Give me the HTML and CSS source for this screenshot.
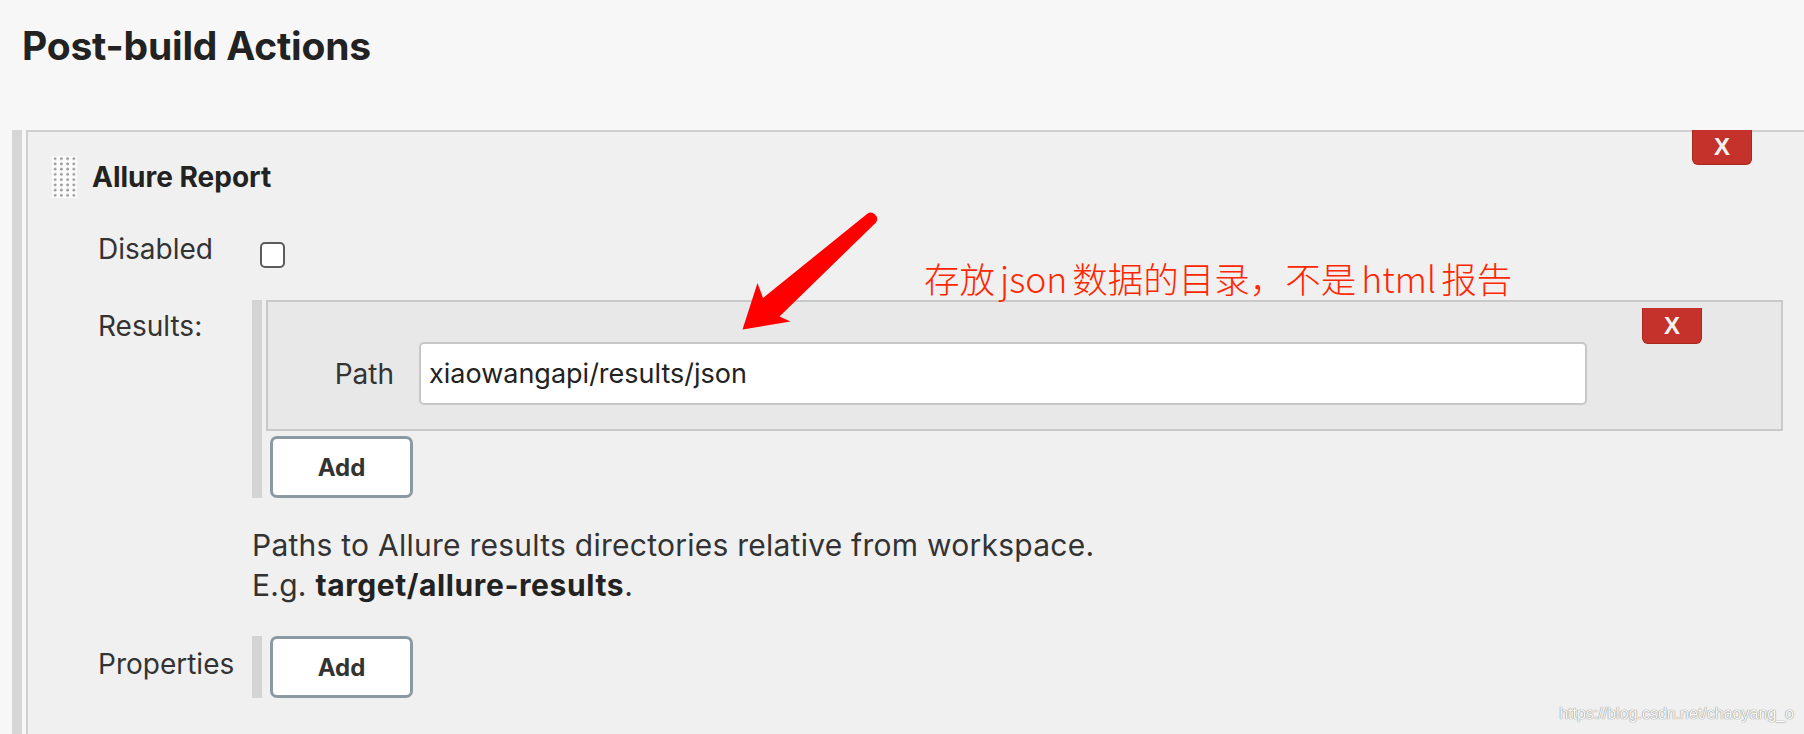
FILE: index.html
```html
<!DOCTYPE html>
<html lang="zh">
<head>
<meta charset="utf-8">
<title>Post-build Actions</title>
<link rel="stylesheet" href="styles.css">
</head>
<body>
<header class="page-head">
  <h1 class="page-title">Post-build Actions</h1>
</header>
<main class="main">
  <div class="side-bar"></div>
  <section class="panel">
    <div class="panel-head">
      <div class="panel-title-group">
        <span class="grip"></span>
        <h2 class="panel-title">Allure Report</h2>
      </div>
      <button class="del-btn del-top" type="button">X</button>
    </div>
    <div class="form">
      <div class="row row-disabled">
        <label class="lbl">Disabled</label>
        <div class="ctl"><input type="checkbox" class="chk"></div>
      </div>
      <div class="row row-results">
        <label class="lbl lbl-results">Results:</label>
        <div class="ctl">
          <div class="repeat">
            <div class="repeat-bar"></div>
            <div class="repeat-body">
              <div class="item">
                <div class="item-fields">
                  <label class="path-lbl">Path</label>
                  <input class="txt" type="text" value="xiaowangapi/results/json">
                </div>
                <button class="del-btn del-item" type="button">X</button>
              </div>
              <button class="add-btn add-first" type="button">Add</button>
            </div>
          </div>
        </div>
      </div>
      <div class="row row-help">
        <div></div>
        <div class="help">
          <div>Paths to Allure results directories relative from workspace.</div>
          <div>E.g. <b>target/allure-results</b>.</div>
        </div>
      </div>
      <div class="row row-props">
        <label class="lbl lbl-props">Properties</label>
        <div class="ctl">
          <div class="repeat">
            <div class="repeat-bar"></div>
            <div class="repeat-body">
              <button class="add-btn" type="button">Add</button>
            </div>
          </div>
        </div>
      </div>
    </div>
  </section>
</main>
<svg class="arrow" width="1804" height="734" viewBox="0 0 1804 734" aria-hidden="true">
  <path d="M867,214 L763,298 L757.5,283 L742.5,329.5 L790.5,321.5 L779.5,316.5 L876,222.5 A6.3,6.3 0 0 0 867,214 Z" fill="#ff0000"/>
</svg>
<div class="note">存放<span class="lat">json</span>数据的目录，不是<span class="lat">html</span>报告</div>
<div class="watermark">https://blog.csdn.net/chaoyang_o</div>
</body>
</html>
```
FILE: styles.css
```css
html, body {
  margin: 0;
  height: 100%;
  overflow: hidden;
}
body {
  position: relative;
  display: flex;
  flex-direction: column;
  background: #f7f7f7;
  font-family: Inter, "Noto Sans", sans-serif;
  color: #333;
}
.page-head {
  height: 130px;
  box-sizing: border-box;
  padding: 22px 0 0 22px;
  flex: none;
}
.page-title {
  margin: 0;
  font-size: 39px;
  font-weight: 700;
  line-height: 47px;
  color: #222;
  letter-spacing: -0.2px;
}
.main {
  flex: 1;
  display: flex;
  padding-left: 12px;
}
.side-bar {
  width: 10px;
  background: #d6d6d6;
  margin-right: 4px;
  flex: none;
}
.panel {
  flex: 1;
  background: #f0f0f0;
  border-top: 2px solid #cfcfcf;
  border-left: 2px solid #d0d0d0;
}
.panel-head {
  display: flex;
  justify-content: space-between;
  align-items: flex-start;
  padding: 0 52px 0 24px;
}
.panel-title-group {
  display: flex;
  align-items: center;
  margin-top: 24px;
  gap: 15px;
}
.grip {
  width: 25px;
  height: 42px;
  background-color: #fbfbfb;
  background-image: radial-gradient(circle, #9c9c9c 1px, transparent 1.7px);
  background-size: 6.25px 5.25px;
}
.panel-title {
  margin: 0;
  font-size: 28px;
  font-weight: 700;
  line-height: 34px;
  color: #222;
}
.del-btn {
  width: 60px;
  height: 36px;
  box-sizing: border-box;
  border: 1px solid #a8271f;
  border-top: none;
  background: #c4322b;
  color: #f2f2f2;
  font-family: "Liberation Sans", Arial, sans-serif;
  font-weight: 700;
  font-size: 24px;
  line-height: 34px;
  padding: 0;
  border-radius: 0 0 6px 6px;
}
.del-top {
  margin-top: -2px;
  height: 35px;
}
.del-item {
  flex: none;
  border-top: 1px solid #c4322b;
}
.form {
  padding: 0 21px 0 70px;
}
.row {
  display: grid;
  grid-template-columns: 154px 1fr;
  align-items: start;
}
.lbl {
  font-size: 28px;
  line-height: 34px;
  color: #333;
}
.row-disabled {
  margin-top: 34px;
}
.chk {
  appearance: none;
  -webkit-appearance: none;
  margin: 10px 0 0 8px;
  width: 25px;
  height: 26px;
  box-sizing: border-box;
  border: 2px solid #5b5b5b;
  border-radius: 5px;
  background: #fff;
  display: block;
}
.row-results {
  margin-top: 32px;
}
.lbl-results {
  padding-top: 9px;
}
.repeat {
  display: flex;
}
.repeat-bar {
  width: 10px;
  flex: none;
  background: #d4d4d4;
}
.repeat-body {
  flex: 1;
  margin-left: 4px;
  display: flex;
  flex-direction: column;
  align-items: flex-start;
}
.item {
  align-self: stretch;
  display: flex;
  align-items: flex-start;
  padding: 6px 79px 24px 0;
  border: 2px solid #c9c9c9;
  background: #e8e8e8;
}
.item-fields {
  flex: 1;
  display: flex;
  align-items: center;
  margin-top: 34px;
}
.path-lbl {
  width: 126px;
  text-align: right;
  margin-right: 25px;
  font-size: 28px;
  line-height: 34px;
  color: #333;
}
.txt {
  width: 1168px;
  height: 63px;
  box-sizing: border-box;
  border: 2px solid #c7c7c7;
  border-radius: 5px;
  background: #fff;
  padding: 0 8px;
  font-family: Inter, "Noto Sans", sans-serif;
  font-size: 27px;
  color: #222;
}
.add-btn {
  margin-left: 4px;
  width: 143px;
  height: 62px;
  box-sizing: border-box;
  border: 3px solid #8a99a2;
  border-radius: 7px;
  background: #fff;
  font-family: Inter, "Noto Sans", sans-serif;
  font-weight: 700;
  font-size: 24px;
  color: #333;
  padding: 0;
}
.add-first {
  margin-top: 5px;
}
.row-help {
  margin-top: 27px;
}
.help {
  font-size: 30px;
  line-height: 40px;
  letter-spacing: 0.25px;
  color: #333;
}
.help b {
  font-weight: 700;
  color: #222;
  letter-spacing: 0.6px;
}
.row-props {
  margin-top: 31px;
}
.lbl-props {
  padding-top: 11px;
}
.arrow {
  position: absolute;
  left: 0;
  top: 0;
  pointer-events: none;
}
.note {
  position: absolute;
  left: 924px;
  top: 252px;
  font-family: "Noto Sans CJK SC", sans-serif;
  font-size: 35.5px;
  font-weight: 300;
  color: #ff2600;
  white-space: nowrap;
}
.note .lat {
  padding: 0 5px;
}
.watermark {
  position: absolute;
  right: 10px;
  top: 705px;
  font-family: "Liberation Sans", Arial, sans-serif;
  font-size: 16px;
  color: #fafafa;
  text-shadow: 0 0 1px #7a7a7a, 0 0 1px #9a9a9a;
  white-space: nowrap;
}
```
